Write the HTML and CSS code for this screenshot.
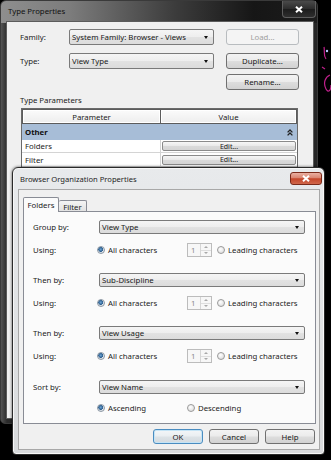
FILE: index.html
```html
<!DOCTYPE html>
<html>
<head>
<meta charset="utf-8">
<link rel="stylesheet" href="styles.css">
</head>
<body>
<div class="screen">
  <section class="win win-type">
    <header class="titlebar tb-dark">
      <span class="title title-dark">Type Properties</span>
      <span class="close close-dark"><svg viewBox="0 0 8 7" class="xicon"><path d="M1 0.8 L7 6.2 M7 0.8 L1 6.2"/></svg></span>
    </header>
    <div class="client client-type">
      <div class="tp-row">
        <span class="tp-label">Family:</span>
        <div class="combo combo-tp"><span class="combo-text">System Family: Browser - Views</span><i class="arrow"></i></div>
        <span class="btn btn-tp btn-disabled">Load...</span>
      </div>
      <div class="tp-row tp-row2">
        <span class="tp-label">Type:</span>
        <div class="combo combo-tp"><span class="combo-text">View Type</span><i class="arrow"></i></div>
        <span class="btn btn-tp">Duplicate...</span>
      </div>
      <div class="tp-row tp-row3">
        <span class="btn btn-tp">Rename...</span>
      </div>
      <div class="section-label">Type Parameters</div>
      <div class="params">
        <div class="params-head">
          <div class="th">Parameter</div>
          <div class="th">Value</div>
        </div>
        <div class="group-row">
          <b>Other</b>
          <svg class="chev" viewBox="0 0 6 7"><path d="M0.6 3.4 L3 1 L5.4 3.4 M0.6 6.4 L3 4 L5.4 6.4"/></svg>
        </div>
        <div class="prow">
          <div class="pname">Folders</div>
          <div class="pval"><span class="edit-btn">Edit...</span></div>
        </div>
        <div class="prow prow-b">
          <div class="pname">Filter</div>
          <div class="pval"><span class="edit-btn">Edit...</span></div>
        </div>
      </div>
    </div>
  </section>

  <svg class="doodle" viewBox="0 0 11 55">
    <path d="M4 2 C5 6 3 10 6 14" class="mag"/>
    <circle cx="7" cy="6" r="1.2" class="blu"/>
    <path d="M10 30 C5 32 3 38 6 44 C8 48 11 46 11 40" class="mag"/>
    <path d="M2 22 L5 24" class="mag"/>
  </svg>

  <section class="win win-browser">
    <header class="titlebar tb-light">
      <span class="title title-light">Browser Organization Properties</span>
      <span class="close close-red"><svg viewBox="0 0 8 7" class="xicon"><path d="M1 0.8 L7 6.2 M7 0.8 L1 6.2"/></svg></span>
    </header>
    <div class="client client-browser">
      <div class="tabs">
        <span class="tab tab-active">Folders</span>
        <span class="tab tab-inactive">Filter</span>
      </div>
      <div class="panel">
        <div class="group">
          <div class="frow">
            <span class="flabel">Group by:</span>
            <div class="combo combo-b"><span class="combo-text">View Type</span><i class="arrow"></i></div>
          </div>
          <div class="frow">
            <span class="flabel">Using:</span>
            <span class="opt opt-all"><i class="radio radio-on"></i>All characters</span>
            <span class="spin"><span class="spin-val">1</span><span class="spin-btns"><i class="sp-up"></i><i class="sp-dn"></i></span></span>
            <span class="opt"><i class="radio"></i>Leading characters</span>
          </div>
        </div>
        <div class="group">
          <div class="frow">
            <span class="flabel">Then by:</span>
            <div class="combo combo-b"><span class="combo-text">Sub-Discipline</span><i class="arrow"></i></div>
          </div>
          <div class="frow">
            <span class="flabel">Using:</span>
            <span class="opt opt-all"><i class="radio radio-on"></i>All characters</span>
            <span class="spin"><span class="spin-val">1</span><span class="spin-btns"><i class="sp-up"></i><i class="sp-dn"></i></span></span>
            <span class="opt"><i class="radio"></i>Leading characters</span>
          </div>
        </div>
        <div class="group">
          <div class="frow">
            <span class="flabel">Then by:</span>
            <div class="combo combo-b"><span class="combo-text">View Usage</span><i class="arrow"></i></div>
          </div>
          <div class="frow">
            <span class="flabel">Using:</span>
            <span class="opt opt-all"><i class="radio radio-on"></i>All characters</span>
            <span class="spin"><span class="spin-val">1</span><span class="spin-btns"><i class="sp-up"></i><i class="sp-dn"></i></span></span>
            <span class="opt"><i class="radio"></i>Leading characters</span>
          </div>
        </div>
        <div class="group group-sort">
          <div class="frow">
            <span class="flabel">Sort by:</span>
            <div class="combo combo-b"><span class="combo-text">View Name</span><i class="arrow"></i></div>
          </div>
          <div class="frow">
            <span class="flabel"></span>
            <span class="opt opt-all"><i class="radio radio-on"></i>Ascending</span>
            <span class="opt"><i class="radio"></i>Descending</span>
          </div>
        </div>
      </div>
      <div class="actions">
        <span class="btn btn-act btn-default">OK</span>
        <span class="btn btn-act">Cancel</span>
        <span class="btn btn-act">Help</span>
      </div>
    </div>
  </section>
</div>
</body>
</html>
```

FILE: styles.css
```css
body {
  margin: 0;
  background: #000;
  font-family: "Noto Sans", "Open Sans", sans-serif;
  font-size: 7.8px;
  color: #1c1c1c;
}

.screen {
  position: relative;
  width: 331px;
  height: 460px;
  overflow: hidden;
  background: #000;
}

.win {
  position: absolute;
  box-sizing: border-box;
  display: flex;
  flex-direction: column;
}

/* ---------- Type Properties window ---------- */
.win-type {
  left: 0;
  top: 0;
  width: 318px;
  height: 424px;
  padding: 0 4px 5px 6px;
  border: 1px solid #3a3a3a;
  border-radius: 6px 6px 5px 5px;
  background:
    linear-gradient(90deg, #8e8e8e 0, #7c7c7c 22%, #3c3c3c 55%, #161616 80%, #1c1c1c 100%) top left / 100% 22px no-repeat,
    linear-gradient(90deg, #555 0, #2a2a2a 6px, #1a1a1a 50%, #262626 100%);
}

.titlebar {
  height: 21px;
  flex: none;
  display: flex;
  align-items: flex-start;
}

.title-dark {
  padding-left: 1px;
  line-height: 20px;
  font-size: 7.8px;
  color: #111;
}

.close {
  margin-left: auto;
  box-sizing: border-box;
  display: flex;
  align-items: center;
  justify-content: center;
}

.close-dark {
  width: 34px;
  height: 17px;
  margin-right: -3px;
  border: 1px solid #5e5e5e;
  border-top: none;
  border-radius: 0 0 4px 4px;
  background: linear-gradient(#4a4a4a, #2c2c2c 50%, #1c1c1c 51%, #2e2e2e);
}

.xicon {
  width: 8px;
  height: 7px;
}

.xicon path {
  stroke: #fff;
  stroke-width: 2;
  fill: none;
}

.client {
  flex: 1;
  box-sizing: border-box;
  display: flex;
  flex-direction: column;
}

.client-type {
  background: #f0f0f0;
  box-shadow: 0 0 0 1px #5c5c5c;
  padding-top: 7px;
}

.tp-row {
  display: flex;
  align-items: center;
  height: 16px;
  padding-left: 13px;
}

.tp-row2 {
  margin-top: 8px;
}

.tp-row3 {
  margin-top: 5px;
  padding-left: 219px;
}

.tp-label {
  width: 49px;
  flex: none;
}

.combo {
  box-sizing: border-box;
  position: relative;
  display: flex;
  align-items: center;
  border: 1px solid #7a7a7a;
  border-radius: 2px;
  background: linear-gradient(#f5f5f5, #eeeeee 48%, #e2e2e2 52%, #dcdcdc);
  color: #1a1a1a;
}

.combo-text {
  padding-left: 2px;
  white-space: nowrap;
}

.arrow {
  position: absolute;
  right: 5px;
  top: 50%;
  margin-top: -1px;
  width: 0;
  height: 0;
  border-left: 2.5px solid transparent;
  border-right: 2.5px solid transparent;
  border-top: 3px solid #111;
}

.combo-tp {
  width: 145px;
  height: 16px;
  margin-right: 12px;
}

.btn {
  box-sizing: border-box;
  display: flex;
  align-items: center;
  justify-content: center;
  border: 1px solid #707070;
  border-radius: 3px;
  background: linear-gradient(#f3f3f3, #ebebeb 48%, #dddddd 52%, #d2d2d2);
  color: #1a1a1a;
  white-space: nowrap;
}

.btn-tp {
  width: 73px;
  height: 16px;
}

.btn-disabled {
  border-color: #b8bcbf;
  background: #f4f4f4;
  color: #a0a0a0;
}

.section-label {
  margin: 5px 0 3px 13px;
  height: 10px;
  line-height: 10px;
}

.params {
  margin-left: 14px;
  width: 277px;
  height: 300px;
  box-sizing: border-box;
  border: 1px solid #6a6a6a;
  background: #fff;
}

.params-head {
  display: grid;
  grid-template-columns: 139px 1fr;
  height: 15px;
}

.th {
  box-sizing: border-box;
  display: flex;
  align-items: center;
  justify-content: center;
  border: 1px solid #5c5c5c;
  box-shadow: inset 0 0 0 1px #fff;
  background: linear-gradient(#fbfbfb, #ededed);
}

.th + .th {
  border-left: none;
}

.group-row {
  height: 16px;
  display: flex;
  align-items: center;
  justify-content: space-between;
  padding: 0 4px 0 3px;
  background: #a7bdd7;
  color: #111;
}

.group-row b {
  font-weight: 700;
}

.chev {
  width: 6px;
  height: 7px;
}

.chev path {
  stroke: #222;
  stroke-width: 1.3;
  fill: none;
}

.prow {
  display: grid;
  grid-template-columns: 139px 1fr;
  height: 12px;
  border-bottom: 1px solid #d4d4d4;
}

.prow-b {
  height: 13px;
}

.pname {
  padding-left: 3px;
  display: flex;
  align-items: center;
  border-right: 1px solid #d4d4d4;
}

.pval {
  display: flex;
  align-items: center;
  padding: 0 1px 0 1px;
}

.edit-btn {
  flex: 1;
  height: 10px;
  box-sizing: border-box;
  display: flex;
  align-items: center;
  justify-content: center;
  border: 1px solid #8a8a8a;
  border-radius: 2px;
  background: linear-gradient(#f6f6f6, #e8e8e8 50%, #dadada 52%, #d4d4d4);
  font-size: 7px;
}

.doodle {
  position: absolute;
  left: 320px;
  top: 45px;
  width: 11px;
  height: 55px;
}

.doodle .mag {
  stroke: #c0208c;
  stroke-width: 1.2;
  fill: none;
}

.doodle .blu {
  fill: #b8c8ff;
}

/* ---------- Browser Organization window ---------- */
.win-browser {
  left: 12px;
  top: 167px;
  width: 313px;
  height: 288px;
  padding: 0 5px 5px 6px;
  border: 1px solid #2a2a2a;
  border-radius: 6px 6px 4px 4px;
  background: linear-gradient(180deg, #e8eaec, #d8dadc);
  box-shadow: inset 0 0 0 1px #f7f7f7, 0 0 3px rgba(0, 0, 0, 0.7);
}

.tb-light {
  height: 22px;
}

.title-light {
  padding-left: 1px;
  line-height: 23px;
  font-size: 7.6px;
  color: #1e1e1e;
}

.close-red {
  width: 32px;
  height: 13px;
  margin-top: 4px;
  margin-right: -3px;
  border: 1px solid #7a2a1a;
  border-radius: 3px;
  background: linear-gradient(#eab0a2, #d98470 45%, #c4462a 52%, #d0674b);
}

.client-browser {
  background: #f0f0f0;
  box-shadow: 0 0 0 1px #a8a8a8;
  padding: 7px 3px 0 4px;
}

.tabs {
  height: 14px;
  display: flex;
  align-items: flex-end;
}

.tab {
  box-sizing: border-box;
  display: flex;
  align-items: center;
  justify-content: center;
  border: 1px solid #898c95;
  border-bottom: none;
  border-radius: 2px 2px 0 0;
}

.tab-active {
  width: 36px;
  height: 15px;
  margin-bottom: -1px;
  background: #fbfbfb;
  position: relative;
  z-index: 1;
}

.tab-inactive {
  width: 28px;
  height: 11px;
  border-left: none;
  background: linear-gradient(#f4f4f4, #e2e2e2);
  padding-top: 1px;
}

.panel {
  box-sizing: border-box;
  height: 213px;
  border: 1px solid #898c95;
  background: #fbfbfb;
  padding: 8px 10px 0 9px;
  display: flex;
  flex-direction: column;
  gap: 16px;
}

.group {
  display: flex;
  flex-direction: column;
  gap: 9px;
}

.group-sort {
  margin-top: 1px;
  gap: 7px;
}

.frow {
  display: flex;
  align-items: center;
  height: 14px;
}

.flabel {
  width: 64px;
  flex: none;
}

.combo-b {
  width: 207px;
  height: 14px;
  margin-left: 2px;
}

.opt {
  display: flex;
  align-items: center;
  white-space: nowrap;
}

.opt-all {
  width: 90px;
  flex: none;
}

.radio {
  box-sizing: border-box;
  width: 8px;
  height: 8px;
  margin-right: 3px;
  border-radius: 50%;
  border: 1px solid #9a9a9a;
  background: radial-gradient(circle at 40% 35%, #ffffff, #e2e2e2 70%, #cfcfcf);
}

.radio-on {
  background: radial-gradient(circle at 45% 40%, #6fa4d2 0, #2d5f8f 45%, #dfe6ee 55%, #d4d4d4 100%);
  border-color: #8c98a4;
}

.spin {
  box-sizing: border-box;
  width: 25px;
  height: 14px;
  margin-right: 5px;
  border: 1px solid #bcbcbc;
  background: #f7f7f7;
  display: flex;
}

.spin-val {
  flex: 1;
  padding-left: 3px;
  color: #8a8a8a;
  line-height: 12px;
}

.spin-btns {
  width: 10px;
  display: flex;
  flex-direction: column;
  border-left: 1px solid #d6d6d6;
}

.sp-up,
.sp-dn {
  flex: 1;
  display: flex;
  align-items: center;
  justify-content: center;
}

.sp-up {
  border-bottom: 1px solid #dedede;
}

.sp-up::after,
.sp-dn::after {
  content: "";
  width: 0;
  height: 0;
  border-left: 2px solid transparent;
  border-right: 2px solid transparent;
}

.sp-up::after {
  border-bottom: 2px solid #a8a8a8;
}

.sp-dn::after {
  border-top: 2px solid #a8a8a8;
}

.actions {
  margin-top: 5px;
  display: flex;
  justify-content: flex-end;
  gap: 6px;
  padding-right: 1px;
}

.btn-act {
  width: 50px;
  height: 15px;
}

.btn-default {
  border-color: #4a8cc0;
  box-shadow: inset 0 0 0 1px #c4e4f6;
  background: linear-gradient(#f3f6f8, #eaeef1 48%, #dde3e7 52%, #d4dadf);
}
```
